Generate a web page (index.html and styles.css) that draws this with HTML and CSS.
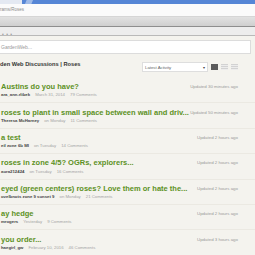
FILE: index.html
```html
<!DOCTYPE html>
<html lang="en">
<head>
    <meta charset="utf-8">
    <title>Garden Web Discussions | Roses</title>
    <link rel="stylesheet" href="styles.css">
</head>

<body>
    <!-- Browser chrome -->
    <div class="tab-strip">
        <div class="tab"></div>
        <div class="new-tab"></div>
    </div>
    <div class="address-bar">rams/Roses</div>
    <div class="toolbar"></div>
    <div class="menu-bar"><span class="dots">&bull; &bull; &bull;</span></div>

    <!-- Page -->
    <div class="page">
        <div class="search-box">GardenWeb...</div>

        <div class="forum-head">
            <div class="forum-title">den Web Discussions | Roses</div>
            <div class="sort-select">
                <span>Latest Activity</span>
                <span class="caret">&#9662;</span>
            </div>
            <div class="view-icons">
                <span class="view active"></span>
                <span class="view"></span>
                <span class="view"></span>
            </div>
        </div>

        <div class="topics">
            <div class="topic">
                <div class="topic-line">
                    <span class="topic-title">Austins do you have?</span>
                    <span class="updated">Updated 30 minutes ago</span>
                </div>
                <div class="topic-meta"><b>ara_ann.rlibek</b><span>March 31, 2014</span><span>79 Comments</span></div>
            </div>
            <div class="topic">
                <div class="topic-line">
                    <span class="topic-title">roses to plant in small space between wall and driv...</span>
                    <span class="updated">Updated 50 minutes ago</span>
                </div>
                <div class="topic-meta"><b>Theresa McHarney</b><span>on Monday</span><span>11 Comments</span></div>
            </div>
            <div class="topic">
                <div class="topic-line">
                    <span class="topic-title">a test</span>
                    <span class="updated">Updated 2 hours ago</span>
                </div>
                <div class="topic-meta"><b>eil zone 6b MI</b><span>on Tuesday</span><span>14 Comments</span></div>
            </div>
            <div class="topic">
                <div class="topic-line">
                    <span class="topic-title">roses in zone 4/5? OGRs, explorers...</span>
                    <span class="updated">Updated 2 hours ago</span>
                </div>
                <div class="topic-meta"><b>aura212424</b><span>on Tuesday</span><span>16 Comments</span></div>
            </div>
            <div class="topic">
                <div class="topic-line">
                    <span class="topic-title">eyed (green centers) roses? Love them or hate the...</span>
                    <span class="updated">Updated 2 hours ago</span>
                </div>
                <div class="topic-meta"><b>ovelbnots zone 9 sunset 9</b><span>on Monday</span><span>21 Comments</span></div>
            </div>
            <div class="topic">
                <div class="topic-line">
                    <span class="topic-title">ay hedge</span>
                    <span class="updated">Updated 2 hours ago</span>
                </div>
                <div class="topic-meta"><b>mrogers</b><span>Yesterday</span><span>9 Comments</span></div>
            </div>
            <div class="topic">
                <div class="topic-line">
                    <span class="topic-title">you order...</span>
                    <span class="updated">Updated 3 hours ago</span>
                </div>
                <div class="topic-meta"><b>haegirl_gw</b><span>February 10, 2016</span><span>46 Comments</span></div>
            </div>
        </div>
    </div>
</body>
</html>
```

FILE: styles.css
```css
body {
    margin: 0;
    padding: 0;
    width: 255px;
    height: 255px;
    overflow: hidden;
    font-family: "Liberation Sans", Arial, Helvetica, sans-serif;
    background-color: #f4f3ee;
    color: #333;
}

/* Browser chrome */
.tab-strip {
    height: 4px;
    background-color: #5686d6;
    display: flex;
}

.tab {
    width: 22px;
    background-color: #e4e9f2;
}

.new-tab {
    width: 8px;
    margin-left: 3px;
    background-color: #9fbbe8;
    clip-path: polygon(20% 0, 100% 0, 80% 100%, 0 100%);
}

.address-bar {
    height: 12px;
    line-height: 12px;
    background-color: #fbfbfb;
    border-bottom: 1px solid #d6d6d6;
    font-size: 4.5px;
    color: #8a8a8a;
}

.toolbar {
    height: 9px;
    background: linear-gradient(#e2e2e2, #cfcfcf);
    border-bottom: 1px solid #8e8e8e;
}

.menu-bar {
    height: 8px;
    line-height: 8px;
    background-color: #ededed;
    border-bottom: 1px solid #b9b9b9;
    padding-left: 2px;
}

.dots {
    font-size: 5px;
    color: #999;
    letter-spacing: 0.5px;
}

/* Page */
.page {
    padding-top: 4px;
}

.search-box {
    height: 12px;
    line-height: 12px;
    margin-right: 4px;
    padding-left: 1px;
    background-color: #fff;
    border: 1px solid #dcdcdc;
    border-left: none;
    font-size: 5px;
    color: #999;
}

.forum-head {
    display: flex;
    align-items: flex-start;
    padding: 6px 17px 6px 0;
}

.forum-title {
    flex-grow: 1;
    font-size: 5.7px;
    font-weight: bold;
    line-height: 8px;
    color: #333;
}

.sort-select {
    width: 60px;
    height: 8px;
    margin-top: 2px;
    padding: 0 2px;
    display: flex;
    justify-content: space-between;
    align-items: center;
    background-color: #fff;
    border: 1px solid #dedede;
    font-size: 4.3px;
    color: #666;
}

.caret {
    font-size: 4px;
    color: #444;
}

.view-icons {
    display: flex;
    gap: 3px;
    margin-top: 4px;
    margin-left: 3px;
}

.view {
    width: 7px;
    height: 6px;
    background: repeating-linear-gradient(#d2d2d2 0 1px, #ececec 1px 2px);
}

.view.active {
    background: #5b5b5b;
}

/* Topic list */
.topic {
    padding: 4px 17px 4px 1px;
    border-bottom: 1px solid #ebe9e2;
}

.topic-line {
    display: flex;
    justify-content: space-between;
    align-items: center;
    height: 9.4px;
}

.topic-title {
    font-size: 7.5px;
    font-weight: bold;
    color: #5c9124;
    white-space: nowrap;
}

.updated {
    font-size: 4.4px;
    color: #9a9a9a;
}

.topic-meta {
    height: 7px;
    line-height: 7px;
    font-size: 4.3px;
    color: #a5a5a5;
    display: flex;
    gap: 5px;
}

.topic-meta b {
    color: #444;
}
```
